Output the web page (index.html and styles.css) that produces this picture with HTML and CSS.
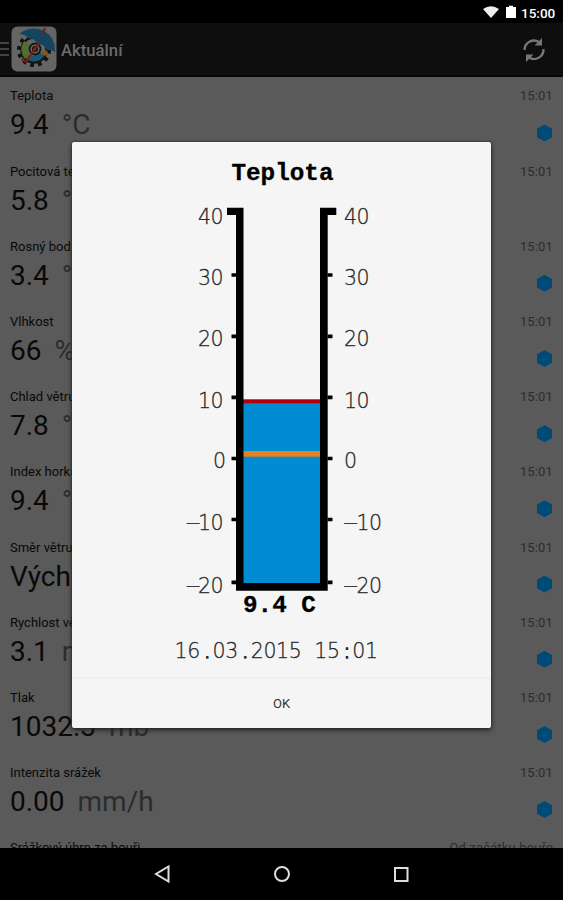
FILE: index.html
```html
<!DOCTYPE html>
<html lang="cs">
<head>
<meta charset="utf-8">
<title>Aktuální</title>
<link rel="stylesheet" href="styles.css">
</head>
<body>
<div class="device">
  <div class="status">
    <svg width="50" height="16" viewBox="0 0 50 16"><path d="M2 4Q10-1.300 18 4L10 13Z" fill="#eee"/><path d="M25 2h3V.8h4V2h3v11H25Z" fill="#fff"/></svg>
    <span>15:00</span>
  </div>
  <header class="bar">
    <div class="drawer"><i></i><i></i><i></i></div>
    <svg class="app" width="46" height="46" viewBox="0 0 46 46">
      <rect x=".5" y=".5" width="45" height="45" rx="6" fill="#656565"/>
      <circle cx="23" cy="24" r="15" fill="none" stroke="#111" stroke-width="4" stroke-dasharray="3.600 4.250"/>
      <circle cx="23" cy="24" r="12.500" fill="#656565" stroke="#151515" stroke-width="2.500"/>
      <path d="M13 15Q7 24 14 33l5-4q-5-6-1-11Z" fill="#4f7026"/>
      <path d="M16 33q9 6 17-3l-4-4q-5 6-10 3Z" fill="#195575"/>
      <path d="M8 8Q20-1 33 5q12 7 11 21-4-3-8-2-3-6-9-6-4-6-10-6-3-4-9-4Z" fill="#15445f"/>
      <circle cx="24" cy="23" r="5.500" fill="#656565" stroke="#151515" stroke-width="1.800"/>
      <circle cx="24" cy="23" r="2.200" fill="none" stroke="#111" stroke-width="1.600"/>
      <path d="M34 2l-2 5M28 17L16 34q-3 3-5-1" fill="none" stroke="#762217" stroke-width="2.200"/>
      <circle cx="34" cy="27" r="2.800" fill="#8a501e"/>
    </svg>
    <h1>Aktuální</h1>
    <svg class="refresh" width="24" height="26" viewBox="0 0 24 26" fill="none" stroke="#777" stroke-width="2.300"><path d="M2.500 14A9.500 9.500 0 0 1 17 6M21.500 13A9.500 9.500 0 0 1 7 21.500"/><path d="M20 2v7.500h-7.500ZM4 26v-7.500h7.500Z" fill="#777" stroke="none"/></svg>
  </header>
  <main class="list">
    <section class="row"><div class="top"><b>Teplota</b><time>15:01</time></div><div class="reading">9.4 <span>°C</span></div><i class="hex"></i></section>
    <section class="row"><div class="top"><b>Pocitová teplota</b><time>15:01</time></div><div class="reading">5.8 <span>°C</span></div></section>
    <section class="row"><div class="top"><b>Rosný bod</b><time>15:01</time></div><div class="reading">3.4 <span>°C</span></div><i class="hex"></i></section>
    <section class="row"><div class="top"><b>Vlhkost</b><time>15:01</time></div><div class="reading">66 <span>%</span></div><i class="hex"></i></section>
    <section class="row"><div class="top"><b>Chlad větru</b><time>15:01</time></div><div class="reading">7.8 <span>°C</span></div><i class="hex"></i></section>
    <section class="row"><div class="top"><b>Index horka</b><time>15:01</time></div><div class="reading">9.4 <span>°C</span></div><i class="hex"></i></section>
    <section class="row"><div class="top"><b>Směr větru</b><time>15:01</time></div><div class="reading">Východ</div><i class="hex"></i></section>
    <section class="row"><div class="top"><b>Rychlost větru</b><time>15:01</time></div><div class="reading">3.1 <span>m/s</span></div><i class="hex"></i></section>
    <section class="row"><div class="top"><b>Tlak</b><time>15:01</time></div><div class="reading">1032.3 <span>mb</span></div><i class="hex"></i></section>
    <section class="row"><div class="top"><b>Intenzita srážek</b><time>15:01</time></div><div class="reading">0.00 <span>mm/h</span></div><i class="hex"></i></section>
    <section class="row"><div class="top"><b>Srážkový úhrn za bouři</b><time>Od začátku bouře</time></div></section>
  </main>
  <nav class="nav">
    <svg width="563" height="52" viewBox="0 0 563 52" fill="none" stroke="#ddd" stroke-width="2"><path d="M168.500 18.500v15L156 26Z"/><circle cx="282" cy="26" r="7"/><rect x="395" y="20" width="12.500" height="13"/></svg>
  </nav>
  <div class="dialog" role="dialog">
    <svg class="gauge" width="419" height="535" viewBox="72 142 419 535">
      <text class="strong" x="282.500" y="180" text-anchor="middle">Teplota</text>
      <rect x="243" y="403" width="78" height="181" fill="#008bd2"/>
      <rect x="243" y="399.300" width="78" height="4" fill="#b0000c"/>
      <rect x="243" y="451" width="78" height="5.700" fill="#e9821e"/>
      <path d="M227 207.700h16.500V583H320V207.700h16.300v7.300h-8.600v375.700H236V215h-9Z"/>
      <path d="M231.500 275h5m91 0h5M231.500 336.300h5m91 0h5M231.500 397.300h5m91 0h5M231.500 458.500h5m91 0h5M231.500 519.500h5m91 0h5M231.500 582.300h5m91 0h5" stroke="#000" stroke-width="3.700"/>
      <g class="scale">
        <text x="198 210.500" y="223.500">40</text><text x="198 210.500" y="285">30</text><text x="198 210.500" y="346">20</text><text x="198 210.500" y="407.500">10</text><text x="213" y="468">0</text><text x="184.500 198 210.500" y="529.500">−10</text><text x="184.500 198 210.500" y="592.500">−20</text>
        <text x="344 356.500" y="223.500">40</text><text x="344 356.500" y="285">30</text><text x="344 356.500" y="346">20</text><text x="344 356.500" y="407.500">10</text><text x="344" y="468">0</text><text x="342 356.500 369" y="529.500">−10</text><text x="342 356.500 369" y="592.500">−20</text>
        <text x="174.500 187.200 204 212.600 225.300 242 250.700 263.400 276.100 288.800 301.500 314.200 314.200 326.900 343.500 352.300" y="658">16<tspan class="dot">.</tspan>03<tspan class="dot">.</tspan>2015<tspan x="301.500"> </tspan><tspan x="314.200 326.900">15</tspan><tspan class="dot" x="343.500">:</tspan><tspan x="352.300 365">01</tspan></text>
      </g>
      <text class="strong" x="243" y="612">9.4 C</text>
    </svg>
    <button class="ok">OK</button>
  </div>
</div>
</body>
</html>
```
FILE: styles.css
```css
* { box-sizing: border-box; }
body { margin: 0; background: #000; font-family: Roboto, sans-serif; }
.device { position: relative; width: 563px; height: 900px; overflow: hidden; display: flex; flex-direction: column; }
.status { height: 23px; flex: none; background: #000; color: #fff; display: flex; justify-content: flex-end; align-items: center; padding: 2px 7px 0 0; font-size: 13.5px; font-weight: 500; }
.status svg { margin-right: -10px; }
.status span { width: 35px; }
.bar { height: 54px; flex: none; background: #0e0e0e; border-bottom: 2px solid #050505; display: flex; align-items: center; padding-right: 17px; }
.drawer { width: 11px; display: flex; flex-direction: column; gap: 4px; }
.drawer i { height: 2px; width: 9px; background: #444; }
.app { flex: none; }
h1 { margin: 2px 0 0 4px; font-size: 16.7px; font-weight: 500; color: #6c6c6c; }
.refresh { margin-left: auto; }
.list { height: 771px; flex: none; overflow: hidden; background: #5a5a5a; }
.row { height: 75.2px; padding: 11.4px 10px 0; color: #090909; display: flex; flex-direction: column; }
.top { display: flex; justify-content: space-between; font-size: 13px; line-height: 16px; flex: none; }
.top b { font-weight: 400; }
.top time { color: #2c2c2c; letter-spacing: .15px; }
.reading { font-size: 28px; line-height: 34px; margin-top: 4px; white-space: pre; }
.reading span { color: #2c2c2c; margin-left: 6px; }
.hex { align-self: flex-end; width: 15px; height: 17px; margin: -18px 1px 0 0; background: #004a78; clip-path: polygon(50% 0, 100% 25%, 100% 75%, 50% 100%, 0 75%, 0 25%); }
.nav { height: 52px; flex: none; background: #000; }
.nav svg { display: block; }
.dialog { position: absolute; left: 72px; top: 142px; width: 419px; height: 586px; background: #f5f5f5; border-radius: 2px; box-shadow: 0 2px 5px #222, 0 0 2px #222; display: flex; flex-direction: column; }
.gauge { display: block; flex: none; }
.strong { font: bold 24.3px "Liberation Mono", monospace; stroke: #000; stroke-width: .3px; }
.scale { font: 200 20.5px "DejaVu Sans", sans-serif; fill: #222; stroke: #333; stroke-width: .3px; }
.dot { stroke: #222; stroke-width: 1.3px; }
.ok { flex: 1; border: 0; border-top: 2px solid #eee; background: none; font: 13px Roboto, sans-serif; color: #333; padding: 0; }
```
